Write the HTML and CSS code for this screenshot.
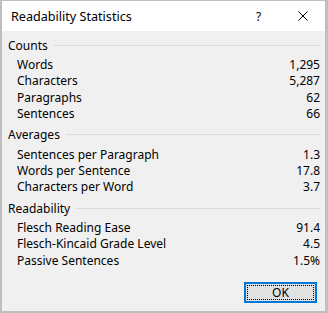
FILE: index.html
```html
<!DOCTYPE html>
<html>
<head>
<meta charset="utf-8">
<link rel="stylesheet" href="styles.css">
</head>
<body>
<div class="window">
  <div class="titlebar">
    <span class="title">Readability Statistics</span>
    <span class="help">?</span>
    <span class="close">
      <svg width="10" height="10" viewBox="0 0 10 10"><path d="M0.5 0.5 L9.5 9.5 M9.5 0.5 L0.5 9.5" stroke="#000" stroke-width="1" fill="none"/></svg>
    </span>
  </div>
  <div class="content">
    <div class="group-head"><span>Counts</span><div class="rule"></div></div>
    <div class="rows">
      <div class="row"><span>Words</span><span>1,295</span></div>
      <div class="row"><span>Characters</span><span>5,287</span></div>
      <div class="row"><span>Paragraphs</span><span>62</span></div>
      <div class="row"><span>Sentences</span><span>66</span></div>
    </div>
    <div class="group-head"><span>Averages</span><div class="rule"></div></div>
    <div class="rows">
      <div class="row"><span>Sentences per Paragraph</span><span>1.3</span></div>
      <div class="row"><span>Words per Sentence</span><span>17.8</span></div>
      <div class="row"><span>Characters per Word</span><span>3.7</span></div>
    </div>
    <div class="group-head"><span>Readability</span><div class="rule"></div></div>
    <div class="rows">
      <div class="row"><span>Flesch Reading Ease</span><span>91.4</span></div>
      <div class="row"><span>Flesch-Kincaid Grade Level</span><span>4.5</span></div>
      <div class="row"><span>Passive Sentences</span><span>1.5%</span></div>
    </div>
    <div class="footer">
      <button class="ok"><span class="focus">OK</span></button>
    </div>
  </div>
</div>
</body>
</html>
```

FILE: styles.css
```css
html, body {
  margin: 0;
  padding: 0;
  height: 100%;
}
body {
  background: #bfbfbf;
  padding: 1px 3px 2px 2px;
  box-sizing: border-box;
  font-family: "Noto Sans", "Open Sans", sans-serif;
  font-size: 12px;
  color: #000;
}
.window {
  height: 100%;
  display: flex;
  flex-direction: column;
  background: #f0f0f0;
}
.titlebar {
  height: 30px;
  background: #fff;
  display: flex;
  align-items: center;
  padding-left: 9px;
  flex-shrink: 0;
}
.title {
  flex: 1;
  font-size: 12.6px;
}
.help {
  width: 12px;
  font-size: 12px;
  margin-right: 30px;
}
.close {
  width: 10px;
  height: 10px;
  margin-right: 17px;
  display: flex;
}
.content {
  flex: 1;
  padding: 6px 5px 0 6px;
  display: flex;
  flex-direction: column;
}
.group-head {
  display: flex;
  align-items: center;
  height: 16px;
  margin-bottom: 4px;
}
.group-head span {
  margin-right: 6px;
}
.rule {
  flex: 1;
  height: 1px;
  background: #dcdcdc;
}
.rows {
  padding-left: 9px;
  margin-bottom: 4.5px;
}
.row {
  display: flex;
  justify-content: space-between;
  height: 16.3px;
  line-height: 16px;
}
.footer {
  display: flex;
  justify-content: flex-end;
  margin-top: 9px;
  padding-right: 3px;
}
.ok {
  width: 73px;
  height: 21px;
  background: #e1e1e1;
  border: 2px solid #0078d7;
  padding: 1px;
  font-family: inherit;
  font-size: 12px;
  display: flex;
}
.focus {
  flex: 1;
  border: 1px dotted #000;
  display: flex;
  align-items: center;
  justify-content: center;
}
```
